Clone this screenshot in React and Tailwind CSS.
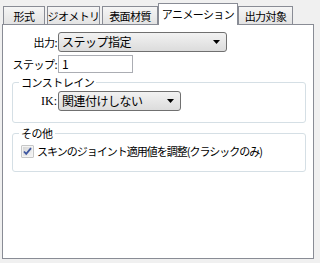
import React from "react";

const font = { fontFamily: '"Noto Sans CJK JP", "Noto Sans", sans-serif' };

function Tab({ label, active, w }) {
  if (active) {
    return (
      <div className={`${w} h-[22px] -mb-px -mx-[2px] z-10 relative bg-white border border-[#898c95] border-b-0 flex items-start justify-center pt-[2px] whitespace-nowrap text-[11px] tracking-[-0.6px] leading-[16px] text-black`}>
        {label}
      </div>
    );
  }
  return (
    <div className={`${w} h-[18px] bg-gradient-to-b from-[#f5f5f5] to-[#e3e3e3] border border-[#898c95] border-b-0 flex items-center justify-center whitespace-nowrap text-[11px] tracking-[-0.6px] leading-[16px] text-black`}>
      {label}
    </div>
  );
}

function Select({ value, w }) {
  return (
    <div className={`${w} h-[20px] rounded-[3px] border border-[#707070] bg-gradient-to-b from-[#f2f2f2] to-[#dcdcdc] flex items-center pl-[3px] pr-[6px] text-[12px] tracking-[-0.5px] whitespace-nowrap text-black`}>
      <span className="flex-1 leading-[16px]">{value}</span>
      <svg width="7" height="4" viewBox="0 0 7 4">
        <path d="M0 0h7L3.5 4z" fill="#000" />
      </svg>
    </div>
  );
}

export default function App() {
  return (
    <div className="w-[320px] h-[263px] bg-[#f0f0f0] pt-[3px] overflow-hidden text-black" style={font}>
      <div className="flex items-end pl-[3px] gap-[2px]">
        <Tab label="形式" w="w-[42px]" />
        <Tab label="ジオメトリ" w="w-[53px]" />
        <Tab label="表面材質" w="w-[56px]" />
        <Tab label="アニメーション" w="w-[80px]" active />
        <Tab label="出力対象" w="w-[55px]" />
      </div>

      <div className="ml-[2px] w-[312px] h-[235px] bg-white border border-[#898c95] pt-[7px]">
        <div className="flex items-center">
          <div className="w-[54px] text-right whitespace-nowrap text-[11px] tracking-[-0.5px] leading-[16px]">出力:</div>
          <div className="ml-px">
            <Select value="ステップ指定" w="w-[169px]" />
          </div>
        </div>

        <div className="flex items-center mt-[3px]">
          <div className="w-[54px] text-right whitespace-nowrap text-[11px] tracking-[-0.5px] leading-[16px]">ステップ:</div>
          <div className="ml-px w-[75px] h-[18px] border border-[#abadb3] bg-white flex items-center pl-[3px] text-[12px] leading-[16px]">
            1
          </div>
        </div>

        <fieldset className="ml-[9px] w-[294px] h-[48px] mt-[2px] border border-[#d5dfe5] rounded-[3px] px-0">
          <legend className="ml-[6px] px-[2px] whitespace-nowrap text-[11px] tracking-[-0.5px] leading-[14px]">コンストレイン</legend>
          <div className="flex items-center mt-[2px]">
            <div className="w-[44px] text-right text-[12px] leading-[16px] font-['Liberation_Serif',serif]">IK:</div>
            <div className="ml-px">
              <Select value="関連付けしない" w="w-[123px]" />
            </div>
          </div>
        </fieldset>

        <fieldset className="ml-[9px] w-[294px] h-[46px] mt-[3px] border border-[#d5dfe5] rounded-[3px] px-0">
          <legend className="ml-[6px] px-[2px] whitespace-nowrap text-[11px] tracking-[-0.5px] leading-[14px]">その他</legend>
          <label className="flex items-center mt-[3px] ml-[8px] gap-[3px] whitespace-nowrap text-[11px] tracking-[-1px] leading-[16px]">
            <svg width="13" height="13" viewBox="0 0 13 13" className="shrink-0">
              <defs>
                <linearGradient id="cb" x1="0" y1="0" x2="1" y2="1">
                  <stop offset="0" stopColor="#d4d4d4" />
                  <stop offset="1" stopColor="#f6f6f6" />
                </linearGradient>
              </defs>
              <rect x="0.5" y="0.5" width="12" height="12" fill="#8e8f8f" />
              <rect x="1.5" y="1.5" width="10" height="10" fill="url(#cb)" stroke="#f4f4f4" />
              <path d="M3 6.5l2.2 2.4L10 3.2" fill="none" stroke="#3d56a0" strokeWidth="1.8" />
            </svg>
            <span>スキンのジョイント適用値を調整(クラシックのみ)</span>
          </label>
        </fieldset>
      </div>
    </div>
  );
}
